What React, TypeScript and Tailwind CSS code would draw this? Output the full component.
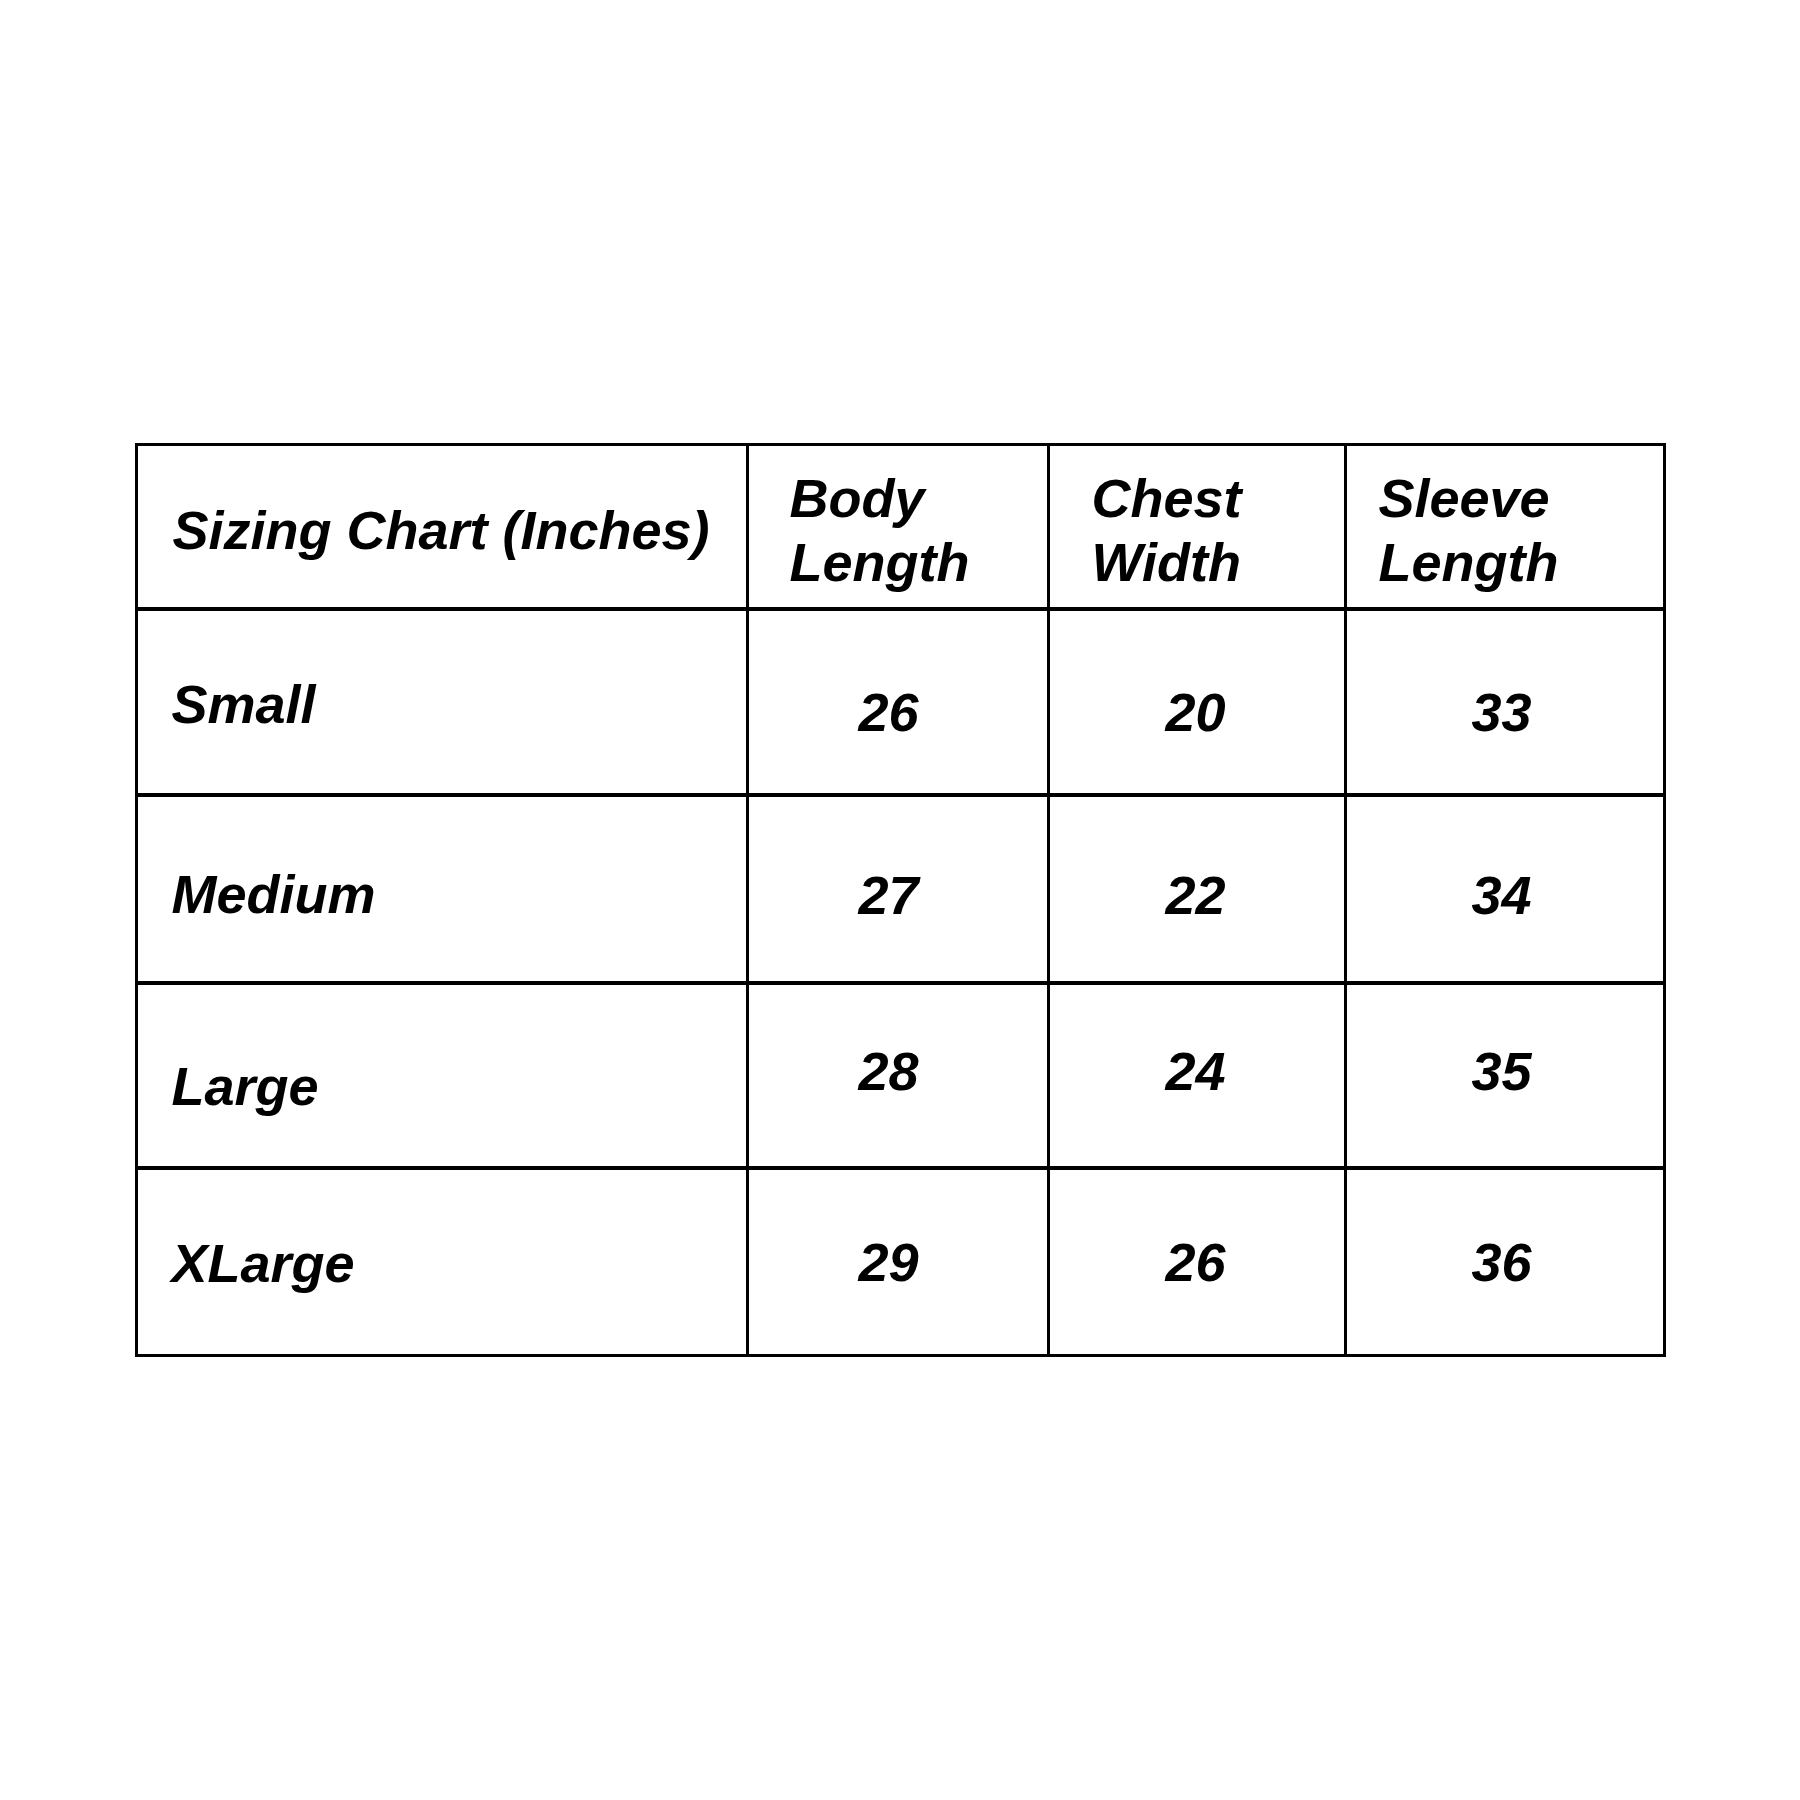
const rows = [
  { size: 'Small', labelPad: 'pt-[4px]', numPad: 'pt-[20px]', values: ['26', '20', '33'] },
  { size: 'Medium', labelPad: 'pt-[10px]', numPad: 'pt-[12px]', values: ['27', '22', '34'] },
  { size: 'Large', labelPad: 'pt-[20px]', numPad: 'pb-[10px]', values: ['28', '24', '35'] },
  { size: 'XLarge', labelPad: 'pt-[2px]', numPad: 'pt-[0px]', values: ['29', '26', '36'] },
]

// horizontal nudge for each number column
const colPad = ['pr-[18px]', 'pr-[2px]', 'pr-[6px]']

export default function App() {
  return (
    <div className="min-h-[1800px] bg-white flex items-center justify-center font-['Liberation_Sans',Arial,sans-serif] font-bold italic text-black text-[54px] leading-[64px]">
      <div className="border-[3px] border-black bg-black grid grid-cols-[608px_298px_294px_316px] grid-rows-[161px_182px_184px_181px_184px] gap-x-[3px] gap-y-[4px]">
        <div className="bg-white flex items-center pl-[35px] pt-[6px]">Sizing Chart (Inches)</div>
        <div className="bg-white flex items-center pl-[41px] pt-[6px]">Body<br />Length</div>
        <div className="bg-white flex items-center pl-[42px] pt-[6px]">Chest<br />Width</div>
        <div className="bg-white flex items-center pl-[32px] pt-[6px]">Sleeve<br />Length</div>

        {rows.map((r) => (
          <>
            <div key={r.size} className={`bg-white flex items-center pl-[34px] ${r.labelPad}`}>{r.size}</div>
            {r.values.map((v, i) => (
              <div key={r.size + i} className={`bg-white flex items-center justify-center ${r.numPad} ${colPad[i]}`}>
                {v}
              </div>
            ))}
          </>
        ))}
      </div>
    </div>
  )
}
